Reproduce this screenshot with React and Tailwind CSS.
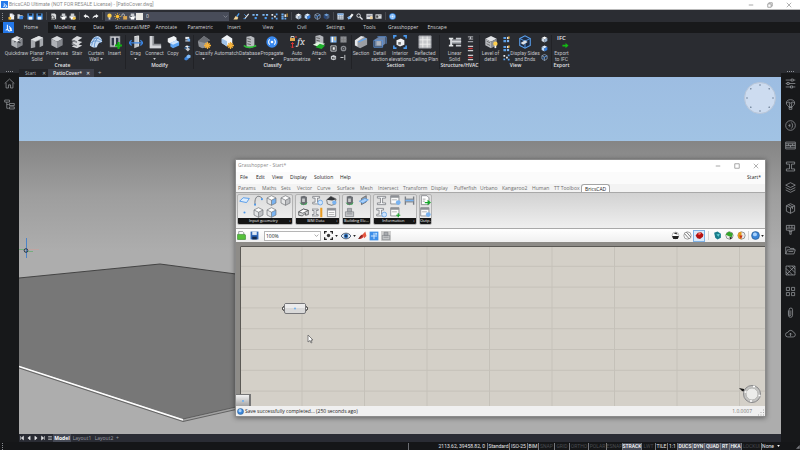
import clsx from 'clsx'

/* Drawings. Everything sits on a 16 unit grid so one Svg wrapper does for all. */

const Svg = ({ className = 'size-[9px]', children }) => (
  <svg viewBox="0 0 16 16" className={clsx('block shrink-0', className)} fill="none" aria-hidden="true">
    {children}
  </svg>
)

const Cube = ({ top = '#d6d8dc', left = '#aeb1b6', right = '#84878d' }) => (
  <>
    <path d="M8 1l6.500 3.300L8 7.600 1.500 4.300z" fill={top} />
    <path d="M1.500 4.300L8 7.600V15l-6.500-3.300z" fill={left} />
    <path d="M14.500 4.300L8 7.600V15l6.500-3.300z" fill={right} />
  </>
)

const ART = {
  // quick access
  page: <><path d="M4 1h6l4 4v10H4z" fill="#eef0f2" /><path d="M10 1v4h4" fill="#aab" /><path d="M1 9h6v6H1z" fill="#f2b632" /></>,
  folder: <><path d="M1 3h5l1 2h6v8H1z" fill="#cdd2d8" /><path d="M6 7h9l-2 7H5z" fill="#3c84dc" /></>,
  disk: <><path d="M1 1h14v14H1z" fill="#4b9bf0" /><path d="M4 1h8v5H4z" fill="#20242c" /><path d="M4 9h8v6H4z" fill="#f4f6f8" /></>,
  preview: <><path d="M3 1h8l3 3v11H3z" fill="#d9dbde" /><circle cx="6" cy="10" r="3.500" stroke="#333" strokeWidth="1.500" /><path d="M9 12l4 3" stroke="#333" strokeWidth="2" /></>,
  printer: <><path d="M4 1h8v5H4zM1 6h14v6H1z" fill="#c9ccd0" /><path d="M4 9h8v6H4z" fill="#fff" /><path d="M3 7h3v2H3z" fill="#3c3f46" /></>,
  printgear: <><path d="M4 1h8v5H4zM1 6h14v6H1z" fill="#c9ccd0" /><path d="M4 9h8v6H4z" fill="#fff" /><circle cx="12" cy="12" r="3.500" fill="#f0c24a" /></>,
  undo: <path d="M1 7l6-5v3c5 0 7 3 8 8-2-3-4-4-8-4v3z" fill="#f1f2f4" />,
  redo: <path d="M15 7L9 2v3C4 5 2 8 1 13c2-3 4-4 8-4v3z" fill="#f1f2f4" />,
  bulb: <><circle cx="8" cy="6" r="5" fill="#ffcf4d" /><path d="M6 10h4v5H6z" fill="#d8d8d8" /></>,
  sun: <><circle cx="8" cy="8" r="4" fill="#ffc02e" /><path d="M8 0v3M8 13v3M0 8h3M13 8h3M2.500 2.500l2 2M11.500 11.500l2 2M13.500 2.500l-2 2M4.500 11.500l-2 2" stroke="#ffc02e" strokeWidth="1.500" /></>,
  lock: <><path d="M2 8V5a3 3 0 016 0v2" stroke="#cfcfcf" strokeWidth="1.800" /><path d="M5 7h9v8H5z" fill="#dca652" /></>,
  brush: <><path d="M14 1L9 8" stroke="#4b9bf0" strokeWidth="3" /><path d="M6 7l6 3-2 5H1z" fill="#f1d39a" /></>,
  wand: <><path d="M13 2L4 13" stroke="#e5e8ec" strokeWidth="2.500" /><path d="M3 3l4 4M1 13h5" stroke="#4b9bf0" strokeWidth="2" /></>,
  layers1: <><path d="M1 2h5v4H1zM9 2h5v4H9z" fill="#7fbaf6" /><path d="M6 9h5v5H6z" fill="#4b9bf0" /></>,
  layers2: <><path d="M1 2h4v4H1zM7 6h4v4H7z" fill="#e8eaee" /><path d="M1 10h4v4H1zM11 1h4v4h-4zM11 11h4v4h-4z" fill="#5aa2f0" /></>,
  layers3: <><path d="M1 1h5v4H1zM1 6h5v4H1zM1 11h5v4H1zM8 11h4v4H8z" fill="#6aaef4" /><path d="M8 3h4v6H8z" fill="#e8eaee" /><path d="M13 1h2v8h-2z" fill="#f3b23a" /></>,
  cubeW: <Cube top="#fff" left="#cfd8e4" right="#9cb4d0" />,
  cubeB: <Cube top="#dcecff" left="#b9d8fb" right="#2f7be0" />,
  cubeO: <><path d="M8 1l6 3v7l-6 4-6-4V4zM2 4l6 3 6-3M8 7v8" stroke="#9fb6d2" strokeWidth="1.500" /><path d="M3 11l10-7" stroke="#3c84dc" strokeWidth="2" /></>,
  cubeD: <Cube top="#6e9ed8" left="#28477a" right="#4a5e7c" />,
  table: <><path d="M1 1h14v14H1z" fill="#dfe6ee" /><path d="M1 1h14v4H1z" fill="#79a9df" /><path d="M1 8.500h14M1 12h14M6 5v10M11 5v10" stroke="#6a7686" /></>,
  eraser: <><path d="M7 6l4-5 4 3-7 9-5 1-2-4z" fill="#f0f2f4" /><path d="M1 10l5-3 3 5-5 3z" fill="#7bb1ee" /></>,
  search: <><circle cx="6" cy="6" r="4" stroke="#e8eaee" strokeWidth="2" /><path d="M9 9l6 6" stroke="#e8eaee" strokeWidth="3" /></>,
  sheet: <><path d="M1 2h14v12H1z" fill="#dfe3e8" /><path d="M3 5h10M3 8h7" stroke="#556" strokeWidth="1.500" /><path d="M9 8h6v6H9z" fill="#f2d39a" /></>,
  panel: <><path d="M1 3h14v10H1z" fill="#d7dade" /><path d="M3 6h4v4H3zM9 6h4" fill="#444" stroke="#444" /></>,
  help: <><circle cx="8" cy="8" r="7.500" fill="#3f95f5" /><circle cx="8" cy="8" r="4.500" stroke="#fff" strokeWidth="1.500" /><path d="M8 5v6M5 8h6" stroke="#fff" strokeWidth="1.500" /></>,
  // ribbon
  quick: <><Cube /><path d="M4 5l8 4M12 4L5 8" stroke="#3d4046" strokeWidth="1.500" /><path d="M5 3l6 3-3 2-6-3z" fill="#f0f1f3" /></>,
  planar: <><path d="M1 5l9-4 5 2v9l-4 2V6L6 8v6l-5 1z" fill="#a6a9ae" /><path d="M1 5l9-4 5 2-9 4z" fill="#e0e2e5" /></>,
  cube: <Cube />,
  stair: <><path d="M2 5l6-4 6 2-6 4zM2 9l5-3 7 2-6 4zM2 13l5-3 7 2-6 3z" fill="#d7d9dc" /><path d="M2 5l6 2v2L2 7zM2 9l6 3v1l-6-2z" fill="#85888e" /></>,
  curtain: <><path d="M1 12C2 5 6 1 10 1c4 1 5 4 5 7-3 0-5 2-6 6-3 1-6 0-8-2z" fill="#c8ddf5" /><path d="M2 9c4-3 8-3 12 0M5 4c4-1 7 0 10 3M6 14c0-5 2-9 5-12M3 12C4 7 6 4 9 2" stroke="#5d8fca" /></>,
  window: <><path d="M2 1h12v13H2z" fill="#85888e" /><path d="M3 2h10v11H3z" fill="#d4d6da" /><path d="M4 3h3v9H4zM9 3h3v9H9z" fill="#2f3646" /><path d="M12 8v8M8 12h8" stroke="#12b312" strokeWidth="2.500" /></>,
  drag: <><path d="M6 2l5-1v12l-5 2z" fill="#c3c6ca" /><path d="M6 2l5-1v12" stroke="#f2f2f2" /><path d="M0 9h16M3 6L0 9l3 3M13 6l3 3-3 3" stroke="#3c84e0" strokeWidth="1.500" /></>,
  connect: <><path d="M2 1h5v9h8v5H2z" fill="#8e9196" /><path d="M2 1h3v11h10v3H2z" fill="#d4d6da" /></>,
  copy: <><path d="M2 4l7-3 3 2v4L5 10 2 8z" fill="#f1f3f5" /><path d="M5 9l7-3 3 2v4l-7 3-3-2z" fill="#5ba3f2" /><path d="M5 9l7-3 3 2-7 3z" fill="#cfe4fc" /></>,
  houseY: <><path d="M1 7l7-6 7 5-3 1v7l-6 1-4-2z" fill="#8f9298" /><path d="M1 7l7-6 7 5-6 3z" fill="#6b6e74" /><path d="M12 8v8M8 12h8M9.500 9.500l5 5M14.500 9.500l-5 5" stroke="#f5b13a" strokeWidth="1.500" /></>,
  automatch: <><path d="M8 0l6 4v5l-6 4-6-4V4z" fill="#f1f4f7" /><path d="M2 4l6 3v6L2 9z" fill="#9fc3ea" /><path d="M12 8v8M8 12h8M9.500 9.500l5 5M14.500 9.500l-5 5" stroke="#f5b13a" strokeWidth="1.500" /></>,
  database: <><path d="M4 2l5-1 4 2v10l-5 2-4-2z" fill="#b9bcc1" /><path d="M5 4l4 1M5 7l4 1M5 10l4 1" stroke="#555" /><path d="M1 12c3 3 9 3 14 0" stroke="#2fbf3a" strokeWidth="2" /></>,
  propagate: <><circle cx="8" cy="8" r="6.500" fill="#3a8af0" /><circle cx="8" cy="8" r="1.500" fill="#fff" /><path d="M5.500 5a4 4 0 000 6M10.500 5a4 4 0 010 6" stroke="#fff" strokeWidth="1.200" /></>,
  attach: <><path d="M4 1l5-1 4 2v7l-5 2-4-2z" fill="#b3b6bb" /><path d="M5 3l4 1M5 6l4 1" stroke="#555" /><path d="M1 11l6-3 8 2-6 4z" fill="#e0f4e0" /><path d="M9 10l6 2-4 4-7-2z" fill="#1fb02c" /></>,
  section: <><path d="M3 7l8-5 4 2v7l-8 4-4-2z" fill="#9b9ea4" /><path d="M1 6l7-5 4 1-8 5v6l-3-1z" fill="#e3e5e8" /><path d="M5 8l9-4" stroke="#5ba3f2" strokeWidth="1.500" /></>,
  detail: <><path d="M2 5l5-3h7v8l-4 3H2z" fill="#6e83a3" /><path d="M1 6h10v8H1zM5 2h10v8" stroke="#5b94dc" /><path d="M4 7h5v5H4z" fill="#aeb4bd" /></>,
  interior: <><path d="M4 6l5-2 4 2v5l-5 2-4-2z" fill="#f0f1f3" /><path d="M6 8h3v3H6z" fill="#777" /><path d="M1 4V1h3M12 1h3v3M15 12v3h-3M4 15H1v-3" stroke="#4b9bf0" strokeWidth="1.800" /></>,
  ceiling: <><path d="M1 1h14v14H1z" fill="#c6c8cb" /><path d="M1 5.500h14M1 10.500h14M5.500 1v14M10.500 1v14" stroke="#f0f0f0" /><path d="M1 1h14v14H1z" stroke="#8b8e93" /></>,
  beam: <><path d="M1 3h5v2H4.500v6H6v2H1v-2h1.500V5H1z" fill="#e3e5e8" /><path d="M4.500 5H15v5H4.500z" fill="#9b9ea4" /><path d="M4.500 7.500H15" stroke="#d6d8dc" strokeWidth="1.500" /><path d="M9 3h6v2H9zM9 11h6v2H9z" fill="#c9ccd1" /></>,
  lod: <><Cube top="#e3e5e8" left="#b8bbc0" right="#8e9196" /><path d="M3 7l4 2M3 10l4 2" stroke="#666" /><circle cx="13" cy="10" r="2.500" fill="#ffcf4d" /><path d="M12 12h2v3h-2z" fill="#eee" /></>,
  sides: <><path d="M2 4l6-3 6 3v8l-6 3-6-3z" fill="#1e2c44" stroke="#5ba3f2" strokeWidth="1.200" /><path d="M2 4l6 3 6-3M8 7v8" stroke="#5ba3f2" /><path d="M3 9l5-3 3 2-5 3z" fill="#dfe3e8" /></>,
  brick: <><path d="M3 2h9v5H3z" fill="#e5e8ec" /><path d="M3 8h9v5H3z" fill="#9da2aa" /><path d="M8 5l6 2v6l-6-2z" fill="#6aaaf0" /></>,
  pair: <><path d="M1 9l5-4 4 2v5l-5 3-4-2z" fill="#3c84dc" /><path d="M6 4l4-3 5 2v5l-5 2-4-2z" fill="#82bbf7" /></>,
  mixed: <><path d="M2 3l5-2 5 2-4 4z" fill="#eef0f3" /><path d="M3 9l6-3 5 3-5 6z" fill="#c8ccd2" /><path d="M1 7h5M10 4h4" stroke="#4b9bf0" strokeWidth="2" /></>,
  bar: <><path d="M1 1h14v14H1z" fill="#7fb4f0" /><path d="M4 2h3v12H4z" fill="#fff" /><path d="M10 2h3v8h-3z" fill="#e8b049" /></>,
  grey: <><path d="M1 1h14v14H1z" fill="#8a8c90" /><path d="M1 8h14M8 1v14" stroke="#777" /></>,
  frame: <><path d="M2 2h12v12H2z" stroke="#cfd2d6" strokeWidth="2" /><path d="M6 5h5v6H6z" fill="#eee" /></>,
  gear: <><circle cx="8" cy="8" r="5" stroke="#8a8d93" strokeWidth="3" /><circle cx="8" cy="8" r="2" fill="#8a8d93" /></>,
  mini: <><path d="M2 5l6-3 6 3v7l-6 2-6-2z" fill="#c9ccd1" /><path d="M5 7h3v4H5zM10 8h2v3h-2z" fill="#333" /></>,
  split: <path d="M1 8h7M11 2v12" stroke="#d7dadd" strokeWidth="2" />,
  steel: <path d="M2 2h12M8 2v5M4 7h10M2 13h12" stroke="#c9ccd1" strokeWidth="2" />,
  steelR: <><path d="M2 3h12M2 13h12" stroke="#c9ccd1" strokeWidth="3" /><path d="M3 8h10" stroke="#d13c3c" strokeWidth="3" /></>,
  view: <><path d="M1 2h6v5H1zM1 9h6v5H1z" fill="#5b9fe8" /><path d="M9 2h4v5H9z" fill="#e2e5ea" /><path d="M12 1h3v5h-3z" fill="#f1b23b" /><path d="M9 9h5v5H9z" fill="#7fb4f0" /></>,
  // grasshopper
  srf: <path d="M1 9l5-5 9 1-4 6z" fill="#dcecfd" stroke="#4d97e8" strokeWidth="1.300" />,
  curve: <><path d="M3 14C2 6 5 1 9 2c3 1 4 2 4 3" stroke="#6b6e73" strokeWidth="1.300" /><circle cx="3" cy="14" r="1.500" fill="#4d97e8" /><circle cx="13" cy="6" r="1.500" fill="#4d97e8" /></>,
  dot: <circle cx="8" cy="8" r="1.500" fill="#4d97e8" />,
  box: <><Cube top="#fdfdfd" left="#e4e5e6" right="#bfc1c4" /><path d="M8 1l6.500 3.300v7.400L8 15l-6.500-3.300V4.300zM1.500 4.300L8 7.600l6.500-3.300M8 7.600V15" stroke="#6f7276" /></>,
  boxB: <><Cube top="#fff" left="#e4e5e6" right="#79b3f1" /><path d="M8 1l6.500 3.300v7.400L8 15l-6.500-3.300V4.300zM1.500 4.300L8 7.600l6.500-3.300M8 7.600V15" stroke="#6f7276" /></>,
  tower: <><path d="M4 2l5-1 4 2v9l-5 3-4-2z" fill="#6b6e73" /><path d="M2 10l6 4 6-4-2 4H5z" fill="#3da455" /><path d="M6 5h4v5H6z" fill="#c7c9cb" /></>,
  slab: <><path d="M1 7l7-4 7 2v6l-4 1V9L6 13l-5-1z" fill="#d8d9da" stroke="#3b3d40" /><path d="M1 7l7-4 7 2-8 4z" fill="#fff" stroke="#3b3d40" /></>,
  ibeam: <path d="M2 2h12v2.500H9.500v7H14V14H2v-2.500h4.500v-7H2z" fill="#f4f5f6" stroke="#6b6e73" />,
  ibeamB: <><path d="M1 2h10v2.500H8v6h3V13H1v-2.500h3.500v-6H1z" fill="#f4f5f6" stroke="#6b6e73" /><circle cx="12" cy="11" r="3.500" fill="#cfe4fb" stroke="#4d97e8" /></>,
  ibeamY: <><path d="M0 3h9v2H6v6h3v2H0v-2h3V5H0z" fill="#f4f5f6" stroke="#6b6e73" /><path d="M12 1h3v14h-3z" fill="#e89b20" /></>,
  cottage: <><path d="M1 7l6-5 8 4-1 1v6l-6 2-6-2z" fill="#dfe0e1" stroke="#555" /><path d="M1 7l6-5 8 4-6 2z" fill="#34363a" /><circle cx="12" cy="11" r="3" fill="#79b3f1" /></>,
  form: <><path d="M2 2h12v12H2z" fill="#fafafa" stroke="#6b6e73" /><path d="M2 2h12v3H2z" fill="#8d9095" /><path d="M4 8h8M4 11h8" stroke="#999" /></>,
  formB: <><path d="M1 1h12v12H1z" fill="#fafafa" stroke="#6b6e73" /><path d="M1 1h12v3H1z" fill="#8d9095" /><path d="M3 7h7" stroke="#999" /><circle cx="12" cy="11" r="3.500" fill="#79b3f1" /></>,
  formG: <><path d="M1 1h12v12H1z" fill="#fafafa" stroke="#6b6e73" /><path d="M1 1h12v3H1z" fill="#8d9095" /><path d="M3 7h7" stroke="#999" /><path d="M12 9v6M9 12h6" stroke="#17a82b" strokeWidth="1.800" /></>,
  stack: <><path d="M2 7h12v7H2z" fill="#c5c7c9" stroke="#7b7e83" /><path d="M5 2h6v5H5z" fill="#a9acb0" stroke="#7b7e83" /><path d="M4 10h8" stroke="#7b7e83" /></>,
  clipB: <><path d="M5 5l7-4v9l-7 4z" fill="#9da1a6" stroke="#505357" /><path d="M2 9l8-4 5 2-8 5z" fill="#a9d0fa" stroke="#4d97e8" /></>,
  profile: <><path d="M1 2h2v12H1zM13 2h2v12h-2z" fill="#7a7e84" /><path d="M3 5h10v6H3z" fill="#8d9196" /><path d="M2 8h12" stroke="#79b3f1" strokeWidth="2" /></>,
  exportG: <><path d="M2 1h8l3 3v10H2z" fill="#fff" stroke="#6b6e73" /><path d="M4 6h4M4 9h3" stroke="#888" /><path d="M7 10h4V7l5 4-5 4v-3H7z" fill="#17a82b" /></>,
  fit: <><path d="M1 5V1h4M11 1h4v4M15 11v4h-4M5 15H1v-4" stroke="#222" strokeWidth="2.500" /><circle cx="8" cy="8" r="3" fill="#333" /></>,
  eye: <><path d="M0 8c4-6 12-6 16 0-4 6-12 6-16 0z" fill="#dbeafa" stroke="#26384f" strokeWidth="1.300" /><circle cx="8" cy="8" r="3.500" fill="#2c6cb5" /><circle cx="8" cy="8" r="1.500" fill="#10233c" /></>,
  paint: <><path d="M1 14c2-4 3-8 7-8l2 4c-2 3-5 4-9 4z" fill="#c9312b" /><path d="M8 6l5-5 2 8-4 4z" fill="#e4573f" /><path d="M1 14l6-6" stroke="#222" strokeWidth="1.500" /></>,
  puzzle: <><path d="M1 1h14v14H1z" fill="#3d8ee8" /><path d="M8 3v10M3 8h10" stroke="#d8ebff" strokeWidth="1.500" /><path d="M10 3h3v3h-3z" fill="#bfe0ff" /></>,
  greenDoc: <><path d="M3 6V1h7l2 2v3" fill="#fff" stroke="#5b5e63" /><path d="M1 6h13l1 1v8H1z" fill="#55c03a" stroke="#23761a" /></>,
  gDisk: <><path d="M1 1h14v14H1z" fill="#2f67b8" /><path d="M4 1h8v6H4z" fill="#dfe9f5" /><path d="M4 10h8v5H4z" fill="#14284a" /></>,
  ballDark: <><circle cx="8" cy="8" r="6" fill="#fff" stroke="#888" /><path d="M2 9h12l-2 5H4z" fill="#222" /><path d="M5 5l4-3 3 4z" fill="#333" /></>,
  ballHatch: <><circle cx="8" cy="8" r="6.500" fill="#fafafa" stroke="#666" /><path d="M3 5l8 9M6 2l8 9" stroke="#555" strokeWidth="1.300" /></>,
  ballRed: <><path d="M1 8l4-5 6-1 4 4-1 4-5 4-5-1z" fill="#b51212" /><path d="M5 5l4-2 2 2-4 2z" fill="#ff7b6b" /></>,
  ballTeal: <><path d="M2 3l6-2 6 4v7l-6 3-4-3z" fill="#197d8c" /><path d="M6 6l6-1-2 5z" fill="#69d0d2" /></>,
  ballGreen: <><circle cx="8" cy="8" r="6.500" fill="#eee" stroke="#555" /><path d="M1 6l6-5 7 4-2 6-6-2z" fill="#35a62a" /><path d="M8 10l5 2-4 3z" fill="#222" /></>,
  ballYel: <><circle cx="8" cy="8" r="6.500" fill="#e8e8e8" stroke="#555" /><path d="M8 1.500A6.500 6.500 0 008 14.500z" fill="#e59a1c" /><path d="M4 8h6l-3 6z" fill="#c43218" /></>,
  ballBlue: <><circle cx="8" cy="8" r="7" fill="#3a85d8" stroke="#23507f" /><circle cx="7" cy="6" r="3.500" fill="#a9d2fb" /></>,
}

const LINE = {
  home: <path d="M1 8l7-6.500L15 8M3 7v7.500h3.500V10h3v4.500H13V7" />,
  tree: <path d="M1 1.500h7v3H1zM4 4.500v9h3M4 8h3M8 6.500h7v3H8zM8 11.500h7v3H8z" />,
  sliders: <path d="M1 3h8M12 3h3M1 8h2M6 8h9M1 13h7M11 13h4M9 1.500h3v3H9zM3 6.500h3v3H3zM8 11.500h3v3H8z" />,
  balloon: <path d="M8 1c4 0 6 2 6 5s-3 4-4 6H6C5 10 2 9 2 6s2-5 6-5zM6 5c0 3 1 5 1 7M10 5c0 3-1 5-1 7M2 6c2-2 4-2 6 0 2-2 4-2 6 0M6 15h4v-3H6z" />,
  radar: <path d="M8 1a7 7 0 100 14A7 7 0 008 1zM6 5.500a3 3 0 010 5M9 3.500a6 6 0 010 9M5.500 7.500h1v1h-1z" />,
  wall: <path d="M1 3h14v10H1zM1 5.500h14M1 10.500h14M1 8h14M5 5.500V8M11 5.500V8M8 8v2.500" />,
  beam: <path d="M2 1.500h12v3H9.500v7H14v3H2v-3h4.500v-7H2z" />,
  layers: <path d="M8 1l7 3.500L8 8 1 4.500zM1 8l7 3.500L15 8M1 11.500L8 15l7-3.500" />,
  cube: <path d="M8 1l6 3v8l-6 3-6-3V4zM2 4l6 3 6-3M8 7v8M5 2.500l6 3V9" />,
  brush: <path d="M2 2h12v7H2zM2 6h12M6 2v4M10 2v4M6 9v2h4V9M7 11v4h2v-4" />,
  folder: <path d="M1 13V3h5l1.500 2H13v2M1 13l2.500-6H15l-2 6zM5 9.500h7" />,
  hatch: <path d="M1.500 1.500h13v13h-13zM1.500 5l9.500 9.500M1.500 10L6 14.500M5 1.500l9.500 9.500M10 1.500l4.500 4.500M14 2L2 14" />,
  tiles: <path d="M2 2h4.500v4.500H2zM9.500 2H14v4.500H9.500zM2 9.500h4.500V14H2zM9.500 9.500H14V14H9.500z" />,
  clip: <path d="M5 5v7a3 3 0 006 0V4a2.500 2.500 0 00-5 0v7.500a1.200 1.200 0 002.500 0V5" />,
  cloud: <path d="M4 13a3.200 3.200 0 010-6.500 4.500 4.500 0 018.500 0A3.300 3.300 0 0112 13zM8 12V7.500M6 9.500l2-2 2 2" />,
}

const Art = ({ name, className }) => <Svg className={className}>{ART[name]}</Svg>

const ArtButton = ({ name, label, className, icon }) => (
  <button type="button" aria-label={label || name} className={clsx('flex shrink-0 items-center justify-center', className)}>
    <Art name={name} className={icon} />
  </button>
)

const Arrow = ({ className = 'text-[#c9cbd0]' }) => (
  <svg viewBox="0 0 4 3" className={clsx('block h-[2px] w-[3px] shrink-0', className)} aria-hidden="true">
    <path d="M0 0h4L2 3z" fill="currentColor" />
  </svg>
)

const Grip = () => <span className="h-[7px] w-px border-l border-dotted border-[#8a8c92]" />

const WindowButtons = ({ restore }) => (
  <div className="flex items-center gap-[13px] text-[#8c8c8c]">
    <button type="button" aria-label="Minimize"><Svg className="size-[6px]"><path d="M2 8h12" stroke="currentColor" strokeWidth="2" /></Svg></button>
    <button type="button" aria-label="Maximize">
      <Svg className="size-[6px]">
        {restore ? <path d="M2 5h9v9H2zM5 5V2h9v9h-3" stroke="currentColor" strokeWidth="2" /> : <path d="M2 2h12v12H2z" stroke="currentColor" strokeWidth="2" />}
      </Svg>
    </button>
    <button type="button" aria-label="Close"><Svg className="size-[6px]"><path d="M2 2l12 12M14 2L2 14" stroke="currentColor" strokeWidth="1.800" /></Svg></button>
  </div>
)

/* ---------- BricsCAD header ---------- */

const QUICK = [
  { w: 'w-[37px]', items: ['page', 'folder', 'disk', 'disk'] },
  { w: 'w-[28px]', items: ['preview', 'printer', 'printgear'] },
  { w: 'w-[18px]', items: ['undo', 'redo'] },
]
const QUICK_AFTER = [
  { w: 'w-[57px]', items: ['brush', 'wand', 'layers1', 'layers1', 'layers2', 'layers3'] },
  { w: 'w-[37px]', items: ['cubeW', 'cubeB', 'cubeO', 'cubeD'] },
  { w: 'w-[47px]', items: ['table', 'eraser', 'search', 'sheet', 'panel'] },
  { w: 'w-[9px]', items: ['help'] },
]

const QuickGroup = ({ w, items }) => (
  <div className={clsx('flex shrink-0 justify-between', w)}>
    {items.map((name, i) => <ArtButton key={i} name={name} icon="size-[7px]" className="w-[9px]" />)}
  </div>
)

const Divider = () => <span className="mx-[2px] h-[8px] w-px shrink-0 bg-[#45474d]" />

function QuickAccess() {
  return (
    <div className="flex h-[12px] items-center bg-[#2b2d33] pl-[2px]">
      <Grip />
      <div className="ml-[4px] flex items-center">
        {QUICK.map((g, i) => (
          <div key={i} className="flex items-center">
            <QuickGroup {...g} />
            <Divider />
          </div>
        ))}
      </div>
      <div className="relative flex h-[9px] w-[124px] items-center bg-[#484c59] pl-px">
        <div className="flex w-[37px] justify-between">
          <Art name="bulb" className="size-[7px]" />
          <Art name="sun" className="size-[7px]" />
          <Art name="lock" className="size-[7px]" />
          <Art name="printer" className="size-[7px]" />
          <span className="size-[7px] bg-[#eceae5]" />
        </div>
        <select aria-label="Layer" className="h-[9px] flex-1 appearance-none bg-transparent pl-[3px] text-[5px] leading-[9px] text-[#e4e5e8]">
          <option>0</option>
        </select>
        <Svg className="absolute right-px size-[5px]"><path d="M2 5l6 6 6-6" stroke="#9a9da6" strokeWidth="2" /></Svg>
      </div>
      <span className="w-[3px]" />
      {QUICK_AFTER.map((g, i) => (
        <div key={i} className="flex items-center">
          {i > 0 && <Divider />}
          <QuickGroup {...g} />
        </div>
      ))}
    </div>
  )
}

const TABS = ['Home', 'Modeling', 'Data', 'Structural/MEP', 'Annotate', 'Parametric', 'Insert', 'View', 'Civil', 'Settings', 'Tools', 'Grasshopper', 'Enscape']

function RibbonTabs() {
  return (
    <nav className="flex h-[11px] bg-[#18191b]">
      <button type="button" aria-label="BricsCAD" className="ml-[3px] flex w-[11px] items-center justify-center bg-[#2478ea]">
        <Svg className="size-[9px]">
          <path d="M6 3v8M3 13l4-3M7 10a3 3 0 105-1L9 6M10 9l4 5" stroke="#fff" strokeWidth="1.800" />
        </Svg>
      </button>
      <div className="grid w-[440px] grid-cols-13">
        {TABS.map((t, i) => (
          <button
            key={t}
            type="button"
            className={clsx('flex items-center justify-center whitespace-nowrap text-[5px] text-[#d3d4d7]', i === 0 && 'bg-[#2a2c31]')}
          >
            {t}
          </button>
        ))}
      </div>
    </nav>
  )
}

const GROUPS = [
  {
    title: 'Create', pad: 'pl-[6px] pr-px',
    tools: [
      { art: 'quick', text: ['Quickdraw'], w: 'w-[21px]' },
      { art: 'planar', text: ['Planar', 'Solid'], w: 'w-[20px]' },
      { art: 'cube', text: ['Primitives'], w: 'w-[20px]', menu: true },
      { art: 'stair', text: ['Stair'], w: 'w-[20px]' },
      { art: 'curtain', text: ['Curtain', 'Wall'], w: 'w-[18px]', inline: true },
      { art: 'window', text: ['Insert'], w: 'w-[19px]' },
    ],
  },
  {
    title: 'Modify', pad: '',
    tools: [
      { art: 'drag', text: ['Drag'], w: 'w-[19px]', menu: true },
      { art: 'connect', text: ['Connect'], w: 'w-[19px]', menu: true },
      { art: 'copy', text: ['Copy'], w: 'w-[18px]' },
      { small: ['brick', 'mixed', 'pair'], w: 'w-[11px]' },
    ],
  },
  {
    title: 'Classify', pad: 'pr-[3px]',
    tools: [
      { art: 'houseY', text: ['Classify'], w: 'w-[20px]', menu: true },
      { art: 'automatch', text: ['Automatch'], w: 'w-[25px]' },
      { art: 'database', text: ['Database'], w: 'w-[21px]', menu: true },
      { art: 'propagate', text: ['Propagate'], w: 'w-[24px]', menu: true },
      { art: 'fx', text: ['Auto', 'Parametrize'], w: 'w-[26px]' },
      { art: 'attach', text: ['Attach'], w: 'w-[18px]', menu: true },
      { small: ['bar', 'frame', 'mini'], w: 'w-[10px]' },
      { small: ['grey', 'gear', 'split'], w: 'w-[10px]' },
    ],
  },
  {
    title: 'Section', pad: '',
    tools: [
      { art: 'section', text: ['Section'], w: 'w-[18px]' },
      { art: 'detail', text: ['Detail', 'section'], w: 'w-[19px]' },
      { art: 'interior', text: ['Interior', 'elevations'], w: 'w-[22px]' },
      { art: 'ceiling', text: ['Reflected', 'Ceiling Plan'], w: 'w-[28px]' },
    ],
  },
  {
    title: 'Structure/HVAC', pad: 'px-[4px]',
    tools: [
      { art: 'beam', text: ['Linear', 'Solid'], w: 'w-[21px]' },
      { small: ['steel', 'steelR', 'steelR'], w: 'w-[10px]' },
    ],
  },
  {
    title: 'View', pad: 'pr-px',
    tools: [
      { art: 'lod', text: ['Level of', 'detail'], w: 'w-[21px]' },
      { small: ['view', 'view', 'layers2'], w: 'w-[10px]' },
      { art: 'sides', text: ['Display Sides', 'and Ends'], w: 'w-[28px]' },
      { small: ['cubeW', 'cubeB', 'cubeO'], w: 'w-[11px]' },
    ],
  },
  { title: 'Export', pad: '', last: true, tools: [{ art: 'ifc', text: ['Export', 'to IFC'], w: 'w-[19px]' }] },
]

function ToolArt({ name }) {
  if (name === 'ifc') {
    return (
      <span className="flex h-[14px] flex-col items-center">
        <span className="text-[6px] leading-[7px] font-semibold text-[#e6e7ea]">IFC</span>
        <Svg className="ml-[8px] size-[7px]"><path d="M1 6h7V2l7 6-7 6v-4H1z" fill="#13b913" /></Svg>
      </span>
    )
  }
  if (name === 'fx') {
    return (
      <span className="flex h-[14px] items-center">
        <svg viewBox="0 0 8 14" className="block h-[14px] w-[8px]" fill="none" aria-hidden="true">
          <path d="M2 3V1.500h3V3" stroke="#ccc" /><path d="M1 3h5v3H1z" fill="#e0a84e" />
          <path d="M3.500 7.500v5.500M2 9l1.500-1.500L5 9M2 11.500L3.500 13 5 11.500M6 2h2" stroke="#d93434" />
        </svg>
        <span className="font-serif text-[10px] leading-[14px] text-[#e6e7ea] italic">fx</span>
      </span>
    )
  }
  return <Art name={name} className="size-[14px]" />
}

function Tool({ art, text, w, menu, inline, small }) {
  if (small) {
    return (
      <div className={clsx('flex shrink-0 flex-col items-center gap-[2px] pt-px', w)}>
        {small.map((s, i) => <ArtButton key={i} name={s} icon="size-[7px]" />)}
      </div>
    )
  }
  return (
    <button type="button" className={clsx('flex shrink-0 flex-col items-center', w)}>
      <ToolArt name={art} />
      <span className="mt-px flex flex-col items-center font-[Roboto] text-[5px] leading-[6px] whitespace-nowrap text-[#c2c4c9]">
        <span>{text[0]}</span>
        {text[1] && <span className="flex items-center gap-px">{text[1]}{inline && <Arrow />}</span>}
        {menu && <span className="flex h-[6px] items-center"><Arrow /></span>}
      </span>
    </button>
  )
}

function Ribbon() {
  return (
    <div className="flex h-[36px] bg-[#2a2c31] pt-[2px]">
      {GROUPS.map((g) => (
        <section key={g.title} className={clsx('flex shrink-0 flex-col', !g.last && 'border-r border-[#212226]')}>
          <div className={clsx('flex h-[27px]', g.pad)}>
            {g.tools.map((t, i) => <Tool key={i} {...t} />)}
          </div>
          <h2 className="flex h-[7px] items-center justify-center self-center text-[5px] font-semibold whitespace-nowrap text-[#e2e3e6]">{g.title}</h2>
        </section>
      ))}
    </div>
  )
}

/* ---------- side rails ---------- */

function Rail({ names, spread }) {
  return (
    <aside className="flex w-[19px] shrink-0 flex-col bg-[#17181a]">
      <div className="flex h-[4px] items-center justify-center bg-[#2a2c31]">
        <span className="w-[7px] border-t border-dotted border-[#8e9096]" />
      </div>
      <div className={clsx('flex flex-col items-center justify-between pt-[5px] text-[#a1a3a7]', spread)}>
        {names.map((n) => (
          <button key={n} type="button" aria-label={n}>
            <Svg className="size-[11px]">
              <g stroke="currentColor">{LINE[n]}</g>
            </Svg>
          </button>
        ))}
      </div>
    </aside>
  )
}

/* ---------- Grasshopper window ---------- */

const GH_MENU = [['File', 'w-[16px]'], ['Edit', 'w-[16px]'], ['View', 'w-[18px]'], ['Display', 'w-[24px]'], ['Solution', 'w-[26px]'], ['Help', 'w-[16px]']]

const GH_TABS = [
  ['Params', 'w-[24px]'], ['Maths', 'w-[19px]'], ['Sets', 'w-[16px]'], ['Vector', 'w-[20px]'], ['Curve', 'w-[20px]'],
  ['Surface', 'w-[23px]'], ['Mesh', 'w-[18px]'], ['Intersect', 'w-[25px]'], ['Transform', 'w-[28px]'], ['Display', 'w-[23px]'],
  ['Pufferfish', 'w-[26px]'], ['Urbano', 'w-[22px]'], ['Kangaroo2', 'w-[30px]'], ['Human', 'w-[22px]'], ['TT Toolbox', 'w-[27px]'],
]

const GH_PANELS = [
  { title: 'Input geometry', plus: true, w: 'w-[56px]', cols: 'grid-cols-4', rows: ['srf', 'curve', 'boxB', 'box', 'dot', 'box', 'boxB'] },
  { title: 'BIM Data', plus: true, w: 'w-[45px]', cols: 'grid-cols-3', rows: ['tower', 'ibeamB', 'cottage', 'slab', 'ibeamY', 'form'] },
  { title: 'Building Ele...', w: 'w-[29px]', cols: 'grid-cols-2', rows: ['tower', 'clipB', 'stack'] },
  { title: 'Information', plus: true, w: 'w-[44px]', cols: 'grid-cols-3', rows: ['ibeam', 'formB', 'profile', 'ibeamB', 'formG'] },
  { title: 'Outp...', w: 'w-[13px]', cols: 'grid-cols-1', rows: ['exportG', 'formB'] },
]

function GhPanels() {
  return (
    <div className="flex h-[37px] gap-[2px] border-y border-[#a9a9a9] bg-linear-to-b from-[#d2d2d2] to-[#efefef] px-px pt-px">
      {GH_PANELS.map((p) => (
        <div key={p.title} className={clsx('flex h-[31px] shrink-0 flex-col overflow-hidden rounded-[2px] border border-[#b4b4b4] bg-linear-to-b from-[#dcdcdc] to-[#f1f1f1]', p.w)}>
          <div className={clsx('grid h-[23px] grid-rows-2 items-center justify-items-center', p.cols)}>
            {p.rows.map((r, i) => <ArtButton key={i} name={r} icon="size-[11px]" />)}
          </div>
          <div className="flex h-[6px] items-center bg-[#151515] text-[4px] leading-[6px] whitespace-nowrap text-[#f2f2f2]">
            <span className="flex-1 text-center">{p.title}</span>
            {p.plus && <span className="pr-px">+</span>}
          </div>
        </div>
      ))}
    </div>
  )
}

function GhToolbar() {
  return (
    <div className="flex h-[13px] items-center bg-linear-to-b from-white to-[#f0f0f0] pr-px">
      <ArtButton name="greenDoc" label="Open" icon="size-[9px]" className="w-[11px]" />
      <ArtButton name="gDisk" label="Save" icon="size-[9px]" className="w-[14px]" />
      <div className="relative ml-[3px] flex h-[10px] w-[57px] items-center border border-[#b5b5b5] bg-white">
        <select aria-label="Zoom" className="h-[8px] w-full appearance-none bg-transparent pl-px text-[5px] leading-[8px] text-[#222]">
          <option>100%</option>
        </select>
        <Svg className="absolute right-px size-[5px]"><path d="M2 5l6 6 6-6" stroke="#777" strokeWidth="2" /></Svg>
      </div>
      <ArtButton name="fit" label="Zoom extents" icon="size-[9px]" className="w-[14px]" />
      <Arrow className="text-[#222]" />
      <ArtButton name="eye" label="Preview" icon="size-[10px]" className="w-[15px]" />
      <Arrow className="text-[#222]" />
      <ArtButton name="paint" label="Sketch" icon="size-[9px]" className="w-[13px]" />
      <span className="flex items-center gap-[2px]">
        <ArtButton name="puzzle" icon="size-[10px]" />
        <span className="flex bg-[#cfcfcf]"><ArtButton name="stack" icon="size-[10px]" /></span>
      </span>
      <div className="ml-auto flex items-center">
        <ArtButton name="ballDark" icon="size-[9px]" className="w-[12px]" />
        <ArtButton name="ballHatch" icon="size-[9px]" className="w-[12px]" />
        <ArtButton name="ballRed" icon="size-[9px]" className="h-[12px] w-[12px] border border-[#7fb2e6] bg-[#d9eafb]" />
        <span className="mx-[3px] h-[9px] w-px bg-[#d5d5d5]" />
        <ArtButton name="ballTeal" icon="size-[9px]" className="w-[11px]" />
        <ArtButton name="ballGreen" icon="size-[9px]" className="w-[12px]" />
        <ArtButton name="ballYel" icon="size-[9px]" className="w-[12px]" />
        <span className="mx-px h-[9px] w-px bg-[#d5d5d5]" />
        <ArtButton name="ballBlue" icon="size-[9px]" className="w-[11px]" />
        <Arrow className="text-[#222]" />
      </div>
    </div>
  )
}

function GhCanvas() {
  return (
    <div className="relative min-h-0 flex-1 overflow-hidden bg-[#d4d0c8]">
      <svg className="block h-full w-full" aria-hidden="true">
        <defs>
          <pattern id="grid" width="62.5" height="20.8" patternUnits="userSpaceOnUse" x="4" y="4">
            <path d="M62 0v20.800M0 20.300h62.500" stroke="#c5c1b9" strokeWidth="1" />
          </pattern>
        </defs>
        <rect width="100%" height="100%" fill="url(#grid)" />
        <rect width="100%" height="4" fill="#8e8c88" />
        <rect width="4" height="100%" fill="#8e8c88" />
        <path d="M4.500 170V4.500H900" stroke="#5b5955" fill="none" />
      </svg>
      {/* component node */}
      <svg className="absolute top-[60px] left-[45px] h-[13px] w-[28px]" viewBox="0 0 28 13" aria-hidden="true">
        <circle cx="3.500" cy="6.500" r="2" fill="#fff" stroke="#222" />
        <circle cx="24.500" cy="6.500" r="2" fill="#fff" stroke="#222" />
        <rect x="3.500" y="1.500" width="21" height="10" rx="1.500" fill="#d9d9d9" stroke="#77777a" />
        <rect x="4" y="2" width="20" height="4" fill="#ebebeb" />
        <circle cx="14" cy="6.500" r="1" fill="#6fb0ee" />
      </svg>
      <svg className="absolute top-[92px] left-[71px] h-[10px] w-[7px]" viewBox="0 0 7 10" aria-hidden="true">
        <path d="M1 1v7l2-1.500L4 9l1-.5-1-2.500h2z" fill="#fff" stroke="#666" strokeWidth=".8" />
      </svg>
      <div className="absolute bottom-0 left-0 flex h-[12px] w-[15px] items-center justify-center border-t border-r-2 border-[#777] bg-linear-to-b from-[#f2f2f2] to-[#a4a4a4]">
        <span className="size-[2px] bg-[#7fb6ea]" />
      </div>
      <svg className="absolute right-[2px] bottom-[2px] h-[20px] w-[24px]" viewBox="0 0 24 20" aria-hidden="true">
        <path d="M0 4l5 1 1 3-3-1z" fill="#161616" />
        <circle cx="13" cy="10" r="8.500" fill="#c4c4c2" stroke="#88888a" />
        <circle cx="13" cy="10" r="6" fill="#ececea" stroke="#b5b5b3" />
        <path d="M14 2.500h2M19.500 11.500h2M11 17h2M5.500 8h2" stroke="#fff" strokeWidth="1.600" />
      </svg>
    </div>
  )
}

function Grasshopper() {
  return (
    <div className="absolute top-[82px] right-[15px] bottom-[17px] left-[216px] flex flex-col border border-[#8b8b8b] bg-[#f3f3f3] shadow-[0_1px_5px_rgba(0,0,0,0.45)]">
      <div className="flex h-[12px] items-center justify-between bg-white pr-[6px] pl-[2px]">
        <h1 className="text-[5px] text-[#8a8a8a]">Grasshopper - Start*</h1>
        <WindowButtons />
      </div>
      <div className="flex h-[12px] items-center bg-[#fbfbfb] pr-[4px] pl-[4px] text-[5px] text-[#1c1c1c]">
        {GH_MENU.map(([t, w]) => <button key={t} type="button" className={clsx('text-left whitespace-nowrap', w)}>{t}</button>)}
        <span className="ml-auto">Start*</span>
      </div>
      <div className="flex h-[8px] items-center pl-[2px] text-[5px] leading-[8px] text-[#6d6d6d]">
        {GH_TABS.map(([t, w]) => <button key={t} type="button" className={clsx('shrink-0 text-left whitespace-nowrap', w)}>{t}</button>)}
        <button type="button" className="flex h-[8px] items-center rounded-t-[3px] border border-b-0 border-[#a4a4a4] bg-white px-[3px] text-[#1c1c1c]">BricsCAD</button>
      </div>
      <GhPanels />
      <GhToolbar />
      <GhCanvas />
      <div className="flex h-[10px] items-center bg-[#f0f0f0] pl-px text-[5px] leading-[10px] text-[#222]">
        <Art name="ballBlue" className="size-[7px]" />
        <span className="ml-px">Save successfully completed... (250 seconds ago)</span>
        <span className="ml-auto text-[#777]">1.0.0007</span>
        <Svg className="ml-[5px] size-[8px] self-end"><path d="M13 3v2M13 8v2M8 8v2M13 13v2M8 13v2M3 13v2" stroke="#aaa" strokeWidth="2" /></Svg>
      </div>
    </div>
  )
}

/* ---------- drawing area ---------- */

function Viewport() {
  return (
    <main className="relative min-h-0 flex-1 overflow-hidden bg-[#adadad]">
      <div className="h-[64px] bg-linear-to-b from-[#9dbde2] to-[#a1c3e4]" />
      <div className="h-[110px] bg-linear-to-b from-[#858585] via-[#9e9e9e] to-[#adadad]" />
      <svg className="absolute top-0 left-0 h-[357px] w-[762px]" viewBox="0 0 762 357" fill="none" aria-hidden="true">
        <path d="M0 201L141 187 217 197 400 226 217 330 164 342 0 289z" fill="#777" />
        <path d="M0 201L141 187 217 197 400 226" stroke="#444" />
        <path d="M164 343.500L217 331.500" stroke="#a2a2a2" strokeWidth="2" />
        <path d="M0 289.500L164 343" stroke="#fff" strokeWidth="1.600" />
        <path d="M164 342L217 330M0 291L164 344.500 217 332.500" stroke="#505050" strokeWidth=".8" />
        <path d="M7.500 161v20" stroke="#4b83c8" />
        <path d="M0 172.500h6M8 174.500h6" stroke="#5fae6a" strokeWidth=".7" />
        <path d="M8 172.500h12" stroke="#c9a09c" strokeWidth=".7" />
        <circle cx="7" cy="173.500" r="1.800" stroke="#26364a" />
        <circle cx="741" cy="21" r="15.500" fill="#cddcf0" stroke="#b9c6d8" />
        {[0, 45, 90, 135, 180, 225, 270, 315].map((a) => (
          <circle key={a} cx="741" cy="8" r=".8" fill="#6f8299" transform={`rotate(${a} 741 21)`} />
        ))}
      </svg>
      <Grasshopper />
    </main>
  )
}

function DocTabs() {
  return (
    <div className="flex h-[8px] items-center bg-[#2a2c31] text-[5px] leading-[8px] text-[#b4b6ba]">
      <button type="button" className="flex h-[8px] w-[29px] items-center justify-between bg-[#222327] pr-[2px] pl-[6px]">Start<span>✕</span></button>
      <button type="button" className="flex h-[8px] w-[46px] items-center justify-between bg-[#3d404b] pr-[4px] pl-[5px] font-semibold text-[#eceded]">PatioCover*<span className="font-normal">✕</span></button>
      <button type="button" aria-label="New tab" className="ml-[4px] text-[6px]">+</button>
    </div>
  )
}

function LayoutTabs() {
  return (
    <div className="flex h-[8px] items-center bg-[#2a2c34] text-[5px] leading-[8px] text-[#9b9da3]">
      <div className="flex w-[34px] items-center justify-around">
        {['M12 3L6 8l6 5zM4 3v10', 'M11 3L5 8l6 5z', 'M5 3l6 5-6 5z', 'M4 3l6 5-6 5zM12 3v10', 'M3 4h10M3 8h10M3 12h10'].map((d) => (
          <button key={d} type="button" aria-label="Layout navigation">
            <Svg className="size-[6px]"><path d={d} fill="#e5e6e8" stroke="#e5e6e8" strokeWidth="1.500" /></Svg>
          </button>
        ))}
      </div>
      <button type="button" className="w-[18px] bg-[#454955] text-center font-bold text-white">Model</button>
      <button type="button" className="w-[22px]">Layout1</button>
      <button type="button" className="w-[22px]">Layout2</button>
      <button type="button" aria-label="Add layout" className="w-[5px]">+</button>
    </div>
  )
}

const STATUS = [
  ['Standard', 'w-[22px]', 'plain'], ['ISO-25', 'w-[18px]', 'plain'], ['BIM', 'w-[11px]', 'plain'], ['SNAP', 'w-[16px]'],
  ['GRID', 'w-[15px]'], ['ORTHO', 'w-[19px]'], ['POLAR', 'w-[18px]'], ['ESNAP', 'w-[16px]'], ['STRACK', 'w-[19px]', 'on'],
  ['LWT', 'w-[14px]'], ['TILE', 'w-[12px]', 'plain'], ['1:1', 'w-[10px]', 'plain'], ['DUCS', 'w-[15px]', 'on'], ['DYN', 'w-[12px]', 'on'],
  ['QUAD', 'w-[16px]', 'on'], ['RT', 'w-[9px]', 'on'], ['HKA', 'w-[12px]', 'on'], ['LOCKUI', 'w-[20px]'], ['None', 'w-[13px]', 'plain'],
]

function StatusBar() {
  return (
    <footer className="flex h-[8px] items-center justify-end bg-[#151618] pl-[2px] font-[Roboto] text-[5px] leading-[7px] text-[#e6e7ea]">
      <Grip />
      <span className="ml-auto w-[79px] border-l border-[#6b6d72] pr-[2px] text-right whitespace-nowrap">2113.62, 39458.82, 0</span>
      {STATUS.map(([t, w, mode]) => (
        <button
          key={t}
          type="button"
          className={clsx(
            'flex h-[7px] items-center justify-center border-l border-[#77797e] whitespace-nowrap',
            w,
            mode === 'on' && 'bg-[#484c59] font-medium text-white',
            !mode && 'text-[#4a4c51]',
          )}
        >
          {t}
        </button>
      ))}
      <span className="flex w-[26px] items-center justify-between pl-[3px]">
        <Arrow className="text-white" />
        <Svg className="size-[5px]"><path d="M15 3v12H3z" fill="#77797e" /></Svg>
      </span>
    </footer>
  )
}

export default function App() {
  return (
    <div className="flex h-screen flex-col overflow-hidden bg-[#17181a] font-['Open_Sans',sans-serif]">
      <header className="shrink-0">
        <div className="flex h-[10px] items-center justify-between border-b border-[#b9b9b9] bg-white pr-[8px] pl-px">
          <div className="flex items-center gap-px">
            <span className="flex size-[7px] items-center justify-center bg-[#2478ea]">
              <Svg className="size-[6px]"><path d="M6 3v8M3 13l4-3M7 10a3 3 0 105-1L9 6M10 9l4 5" stroke="#fff" strokeWidth="2" /></Svg>
            </span>
            <span className="font-[Roboto] text-[5px] leading-[9px] text-[#8a8a8a]">BricsCAD Ultimate (NOT FOR RESALE License) - [PatioCover.dwg]</span>
          </div>
          <WindowButtons restore />
        </div>
        <QuickAccess />
        <RibbonTabs />
        <Ribbon />
      </header>
      <div className="flex min-h-0 flex-1">
        <Rail names={['home', 'tree']} spread="h-[37px]" />
        <div className="flex min-w-0 flex-1 flex-col">
          <DocTabs />
          <Viewport />
          <LayoutTabs />
        </div>
        <Rail
          names={['sliders', 'balloon', 'radar', 'wall', 'beam', 'layers', 'cube', 'brush', 'folder', 'hatch', 'tiles', 'clip', 'cloud']}
          spread="h-[266px]"
        />
      </div>
      <StatusBar />
    </div>
  )
}
